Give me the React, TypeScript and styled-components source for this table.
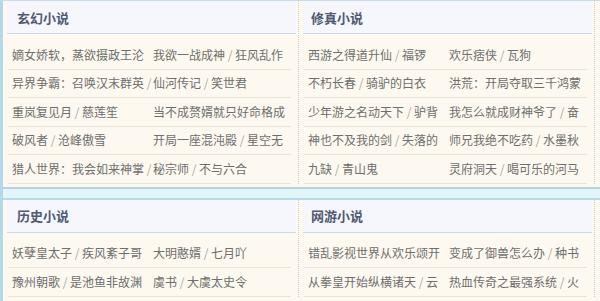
import React from "react";
import styled, { createGlobalStyle } from "styled-components";

const Global = createGlobalStyle`
  html, body { margin: 0; padding: 0; background: #fdf9f0; }
  body { font-family: "Noto Sans CJK SC", "Noto Sans", sans-serif; }
`;

const Page = styled.div`
  width: 600px;
  height: 301px;
  overflow: hidden;
  box-sizing: border-box;
  border-left: 3px solid #b6d8e6;
  border-top: 1px solid #c4dfea;
  background: #fdf9f0;
`;

const Section = styled.div`
  display: flex;
  padding-bottom: 3px;
`;

const Band = styled.div`
  height: 9px;
  border-top: 2px solid #b3d5e3;
  border-bottom: 2px solid #b9d9e6;
  background: #e1f5fa;
`;

const Panel = styled.div`
  width: 296px;
  box-sizing: border-box;
  border-right: 1px dotted #d3cec4;
`;

const Header = styled.div<{ $indent: number }>`
  height: 32px;
  margin: 0 2px 0 4px;
  padding-left: ${(p) => p.$indent}px;
  display: flex;
  align-items: center;
  background: #f6f7fd;
  border-bottom: 1px solid #c6dde8;
  font-size: 13px;
  font-weight: 700;
  color: #505a72;
`;

const List = styled.div`
  padding-top: 7px;
`;

const Row = styled.div`
  display: flex;
  height: 27.5px;
  align-items: center;
  margin: 0 7px 0 5px;
  padding-left: 4px;
  border-bottom: 1px solid #e9e3d8;
`;

const Cell = styled.div`
  width: 141px;
  line-height: 18px;
  flex: none;
  overflow: hidden;
  white-space: nowrap;
  font-size: 12px;
  color: #6e6e6e;
`;

const Slash = styled.span`
  color: #aaa;
`;

type Item = [string, string?];

const Entry = ({ item }: { item: Item }) => (
  <Cell>
    {item[0]}
    {item[1] !== undefined && (
      <>
        <Slash> / </Slash>
        {item[1]}
      </>
    )}
  </Cell>
);

type PanelData = { title: string; rows: [Item, Item][] };

const sections: PanelData[][] = [
  [
    {
      title: "玄幻小说",
      rows: [
        [["嫡女娇软，蒸欲摄政王沦"], ["我欲一战成神", "狂风乱作"]],
        [["异界争霸：召唤汉末群英", ""], ["仙河传记", "笑世君"]],
        [["重岚复见月", "慈莲笙"], ["当不成赘婿就只好命格成"]],
        [["破风者", "沧峰傲雪"], ["开局一座混沌殿", "星空无"]],
        [["猎人世界：我会如来神掌", ""], ["秘宗师", "不与六合"]],
      ],
    },
    {
      title: "修真小说",
      rows: [
        [["西游之得道升仙", "福锣"], ["欢乐痞侠", "瓦狗"]],
        [["不朽长春", "骑驴的白衣"], ["洪荒：开局夺取三千鸿蒙"]],
        [["少年游之名动天下", "驴背"], ["我怎么就成财神爷了", "奋"]],
        [["神也不及我的剑", "失落的"], ["师兄我绝不吃药", "水墨秋"]],
        [["九缺", "青山鬼"], ["灵府洞天", "喝可乐的河马"]],
      ],
    },
  ],
  [
    {
      title: "历史小说",
      rows: [
        [["妖孽皇太子", "疾风紊子哥"], ["大明憨婿", "七月吖"]],
        [["豫州朝歌", "是池鱼非故渊"], ["虞书", "大虞太史令"]],
      ],
    },
    {
      title: "网游小说",
      rows: [
        [["错乱影视世界从欢乐颂开"], ["变成了御兽怎么办", "种书"]],
        [["从拳皇开始纵横诸天", "云"], ["热血传奇之最强系统", "火"]],
      ],
    },
  ],
];

export default function App() {
  return (
    <>
      <Global />
      <Page>
        {sections.map((sec, si) => (
          <React.Fragment key={si}>
            {si > 0 && <Band />}
            <Section>
              {sec.map((p, pi) => (
                <Panel key={pi}>
                  <Header $indent={pi === 0 ? 10 : 8}>{p.title}</Header>
                  <List>
                    {p.rows.map((r, ri) => (
                      <Row key={ri}>
                        <Entry item={r[0]} />
                        <Entry item={r[1]} />
                      </Row>
                    ))}
                  </List>
                </Panel>
              ))}
            </Section>
          </React.Fragment>
        ))}
      </Page>
    </>
  );
}
